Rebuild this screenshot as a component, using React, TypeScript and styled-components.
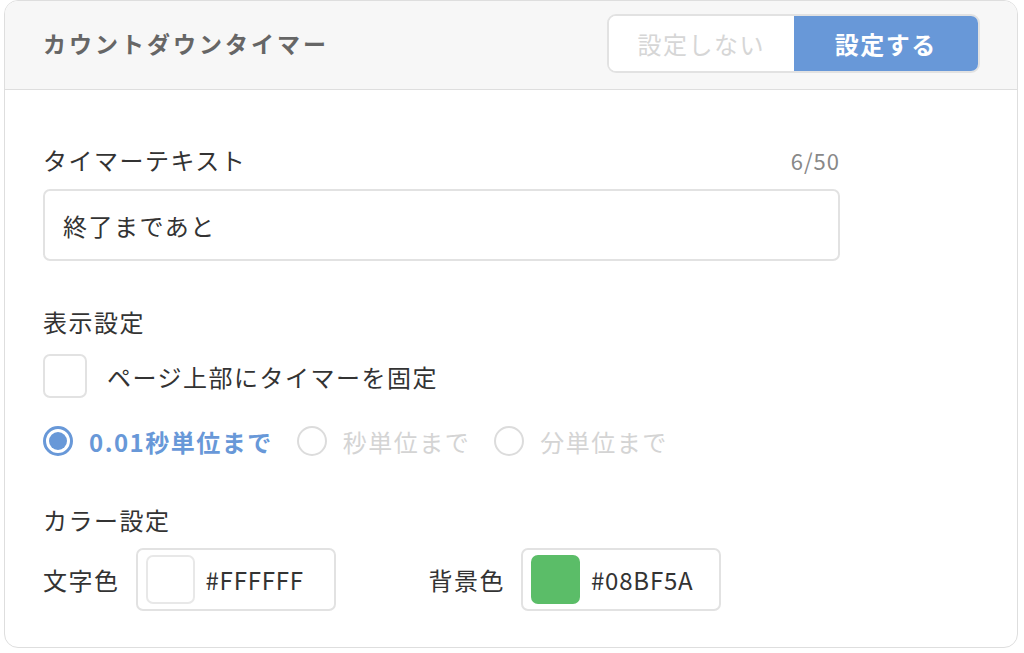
import React from "react";
import styled, { createGlobalStyle } from "styled-components";

const Global = createGlobalStyle`
  html, body { margin: 0; padding: 0; background: #fff; }
  body { font-family: "Noto Sans CJK JP", "Noto Sans", sans-serif; color: #333; }
  * { box-sizing: border-box; }
`;

const Card = styled.div`
  margin: 0 6px 0 4px;
  height: 648px;
  border: 1px solid #dedede;
  border-radius: 14px;
  overflow: hidden;
  background: #fff;
`;

const Header = styled.div`
  height: 89px;
  background: #f7f7f7;
  border-bottom: 1px solid #dedede;
  display: flex;
  align-items: flex-start;
  justify-content: space-between;
  padding: 13px 37px 0 38px;
`;

const Title = styled.h2`
  margin: 0;
  line-height: 58px;
  font-size: 23px;
  font-weight: 700;
  letter-spacing: 3px;
  color: #666;
`;

const Toggle = styled.div`
  display: flex;
  width: 373px;
  height: 59px;
  border: 2px solid #e2e2e2;
  border-radius: 9px;
  overflow: hidden;
  background: #fff;
`;

const ToggleOption = styled.div<{ $active?: boolean }>`
  flex: 1;
  display: flex;
  align-items: center;
  justify-content: center;
  font-size: 24px;
  letter-spacing: 1.5px;
  font-weight: ${(p) => (p.$active ? 700 : 400)};
  color: ${(p) => (p.$active ? "#fff" : "#d6d6d6")};
  background: ${(p) => (p.$active ? "#6898d8" : "#fff")};
`;

const Body = styled.div`
  padding: 52px 38px 0 38px;
`;

const Form = styled.div`
  width: 797px;
  display: flex;
  flex-direction: column;
`;

const LabelRow = styled.div`
  display: flex;
  justify-content: space-between;
  align-items: center;
  height: 36px;
`;

const Label = styled.div<{ $mt?: number }>`
  font-size: 24px;
  letter-spacing: 1.5px;
  line-height: 36px;
  color: #333;
  margin-top: ${(p) => p.$mt ?? 0}px;
`;

const Counter = styled.div`
  font-size: 22px;
  color: #888;
  letter-spacing: 1px;
`;

const TextInput = styled.div`
  margin-top: 11px;
  height: 72px;
  border: 2px solid #e2e2e2;
  border-radius: 7px;
  display: flex;
  align-items: center;
  padding-left: 18px;
  font-size: 24px;
  letter-spacing: 1.5px;
  color: #333;
`;

const CheckRow = styled.div`
  margin-top: 14px;
  display: flex;
  align-items: center;
  gap: 20px;
`;

const CheckBox = styled.div`
  width: 44px;
  height: 44px;
  border: 2px solid #e2e2e2;
  border-radius: 7px;
  background: #fff;
`;

const CheckText = styled.span`
  font-size: 24px;
  letter-spacing: 1.5px;
  color: #333;
`;

const RadioRow = styled.div`
  margin-top: 25px;
  height: 36px;
  display: flex;
  align-items: center;
  gap: 24px;
`;

const RadioItem = styled.div`
  display: flex;
  align-items: center;
  gap: 16px;
`;

const RadioCircle = styled.div<{ $checked?: boolean }>`
  width: 30px;
  height: 30px;
  border-radius: 50%;
  border: ${(p) => (p.$checked ? "3px solid #6898d8" : "2px solid #dcdcdc")};
  display: flex;
  align-items: center;
  justify-content: center;
  background: #fff;
  &::after {
    content: "";
    display: ${(p) => (p.$checked ? "block" : "none")};
    width: 18px;
    height: 18px;
    border-radius: 50%;
    background: #6898d8;
  }
`;

const RadioText = styled.span<{ $checked?: boolean }>`
  font-size: 24px;
  letter-spacing: 1.5px;
  font-weight: ${(p) => (p.$checked ? 700 : 400)};
  color: ${(p) => (p.$checked ? "#6898d8" : "#d4d4d4")};
`;

const ColorRow = styled.div`
  margin-top: 10px;
  display: flex;
  align-items: center;
  gap: 93px;
`;

const ColorGroup = styled.div`
  display: flex;
  align-items: center;
  gap: 16px;
`;

const ColorBox = styled.div`
  width: 200px;
  height: 63px;
  border: 2px solid #e2e2e2;
  border-radius: 7px;
  display: flex;
  align-items: center;
  padding-left: 8px;
  gap: 11px;
`;

const Swatch = styled.div<{ $color: string }>`
  width: 49px;
  height: 49px;
  border-radius: 7px;
  background: ${(p) => p.$color};
  border: ${(p) => (p.$color === "#ffffff" ? "2px solid #e8e8e8" : "none")};
`;

const HexText = styled.span`
  font-size: 24px;
  letter-spacing: 0.8px;
  color: #333;
`;

export default function App() {
  return (
    <>
      <Global />
      <Card>
        <Header>
          <Title>カウントダウンタイマー</Title>
          <Toggle>
            <ToggleOption>設定しない</ToggleOption>
            <ToggleOption $active>設定する</ToggleOption>
          </Toggle>
        </Header>
        <Body>
          <Form>
            <LabelRow>
              <Label>タイマーテキスト</Label>
              <Counter>6/50</Counter>
            </LabelRow>
            <TextInput>終了まであと</TextInput>

            <Label $mt={43}>表示設定</Label>
            <CheckRow>
              <CheckBox />
              <CheckText>ページ上部にタイマーを固定</CheckText>
            </CheckRow>
            <RadioRow>
              <RadioItem>
                <RadioCircle $checked />
                <RadioText $checked>0.01秒単位まで</RadioText>
              </RadioItem>
              <RadioItem>
                <RadioCircle />
                <RadioText>秒単位まで</RadioText>
              </RadioItem>
              <RadioItem>
                <RadioCircle />
                <RadioText>分単位まで</RadioText>
              </RadioItem>
            </RadioRow>

            <Label $mt={43}>カラー設定</Label>
            <ColorRow>
              <ColorGroup>
                <Label>文字色</Label>
                <ColorBox>
                  <Swatch $color="#ffffff" />
                  <HexText>#FFFFFF</HexText>
                </ColorBox>
              </ColorGroup>
              <ColorGroup>
                <Label>背景色</Label>
                <ColorBox>
                  <Swatch $color="#5bbd68" />
                  <HexText>#08BF5A</HexText>
                </ColorBox>
              </ColorGroup>
            </ColorRow>
          </Form>
        </Body>
      </Card>
    </>
  );
}
